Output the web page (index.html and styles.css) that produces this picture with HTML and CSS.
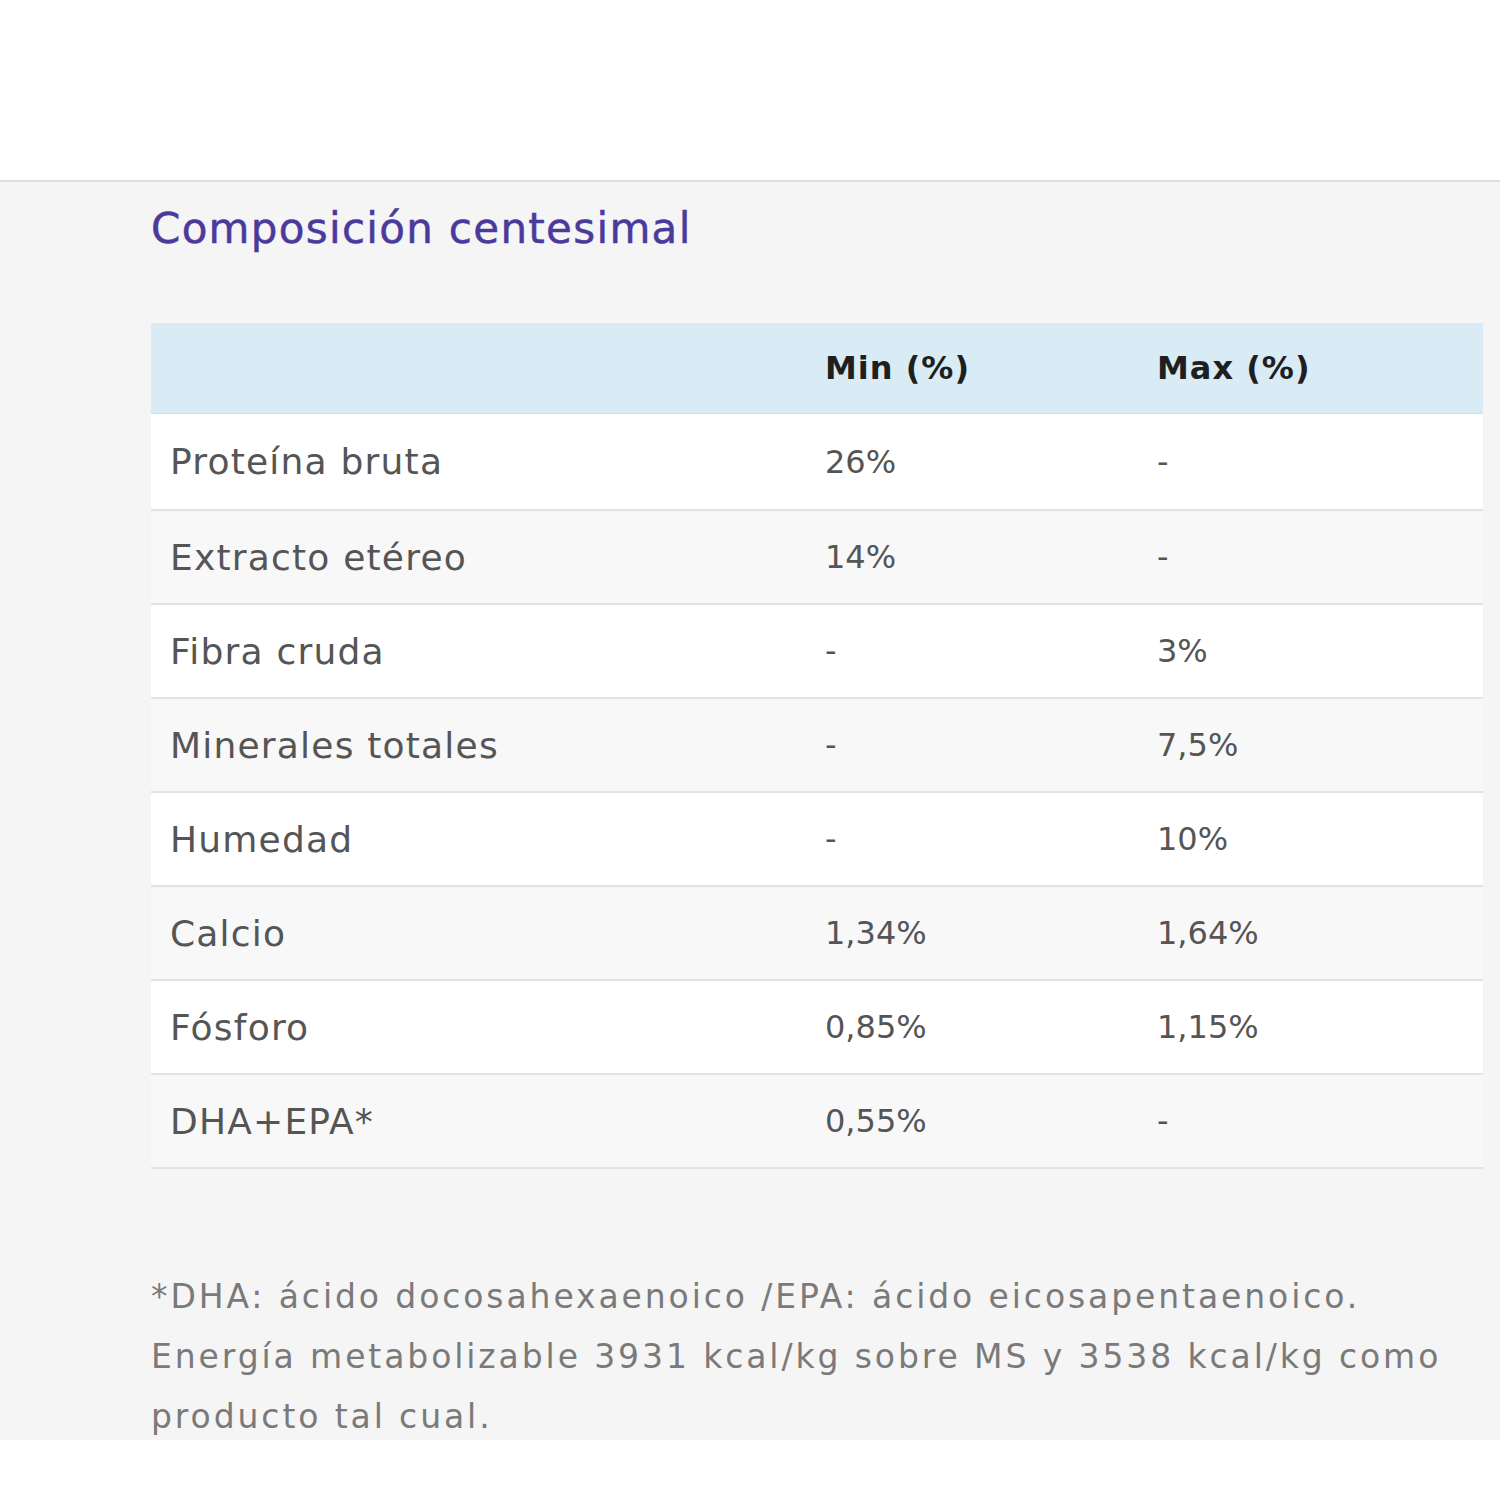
FILE: index.html
```html
<!DOCTYPE html>
<html lang="es">
<head>
<meta charset="utf-8">
<title>Composición centesimal</title>
<link rel="stylesheet" href="styles.css">
</head>
<body>
<div class="top"></div>
<section class="panel">
  <h2 class="title">Composición centesimal</h2>
  <table class="comp">
    <thead>
      <tr><th class="c1"></th><th class="c2">Min (%)</th><th class="c3">Max (%)</th></tr>
    </thead>
    <tbody>
      <tr><td class="name">Proteína bruta</td><td>26%</td><td>-</td></tr>
      <tr><td class="name">Extracto etéreo</td><td>14%</td><td>-</td></tr>
      <tr><td class="name">Fibra cruda</td><td>-</td><td>3%</td></tr>
      <tr><td class="name">Minerales totales</td><td>-</td><td>7,5%</td></tr>
      <tr><td class="name">Humedad</td><td>-</td><td>10%</td></tr>
      <tr><td class="name">Calcio</td><td>1,34%</td><td>1,64%</td></tr>
      <tr><td class="name">Fósforo</td><td>0,85%</td><td>1,15%</td></tr>
      <tr><td class="name">DHA+EPA*</td><td>0,55%</td><td>-</td></tr>
    </tbody>
  </table>
  <p class="note">*DHA: ácido docosahexaenoico /EPA: ácido eicosapentaenoico.<br>Energía metabolizable 3931 kcal/kg sobre MS y 3538 kcal/kg como producto tal cual.</p>
</section>
</body>
</html>
```

FILE: styles.css
```css
html, body {
  margin: 0;
  padding: 0;
  background: #ffffff;
}
body {
  font-family: "DejaVu Sans", "Noto Sans", sans-serif;
}
.top {
  height: 180px;
}
.panel {
  border-top: 2px solid #dedede;
  background: #f5f5f5;
  padding: 22px 17px 0 151px;
  height: 1260px;
  box-sizing: border-box;
}
.title {
  margin: 0;
  font-size: 42px;
  line-height: 50px;
  font-weight: normal;
  letter-spacing: 1.3px;
  color: #4a3a9b;
  -webkit-text-stroke: 0.5px #4a3a9b;
}
.comp {
  margin-top: 69px;
  width: 1332px;
  border-collapse: collapse;
  font-size: 32px;
  color: #555555;
}
.comp th {
  background: #d9ecf5;
  height: 90px;
  text-align: left;
  font-weight: bold;
  color: #1f1f1f;
  letter-spacing: 1px;
  padding: 0 0 0 19px;
  border-bottom: 1px solid #cfe0e8;
}
.comp th.c1 { width: 636px; }
.comp th.c2 { width: 313px; }
.comp td {
  height: 92px;
  padding: 0 0 0 19px;
  border-bottom: 2px solid #e2e2e2;
}
.comp td.name {
  font-size: 36px;
  letter-spacing: 1.2px;
}
.comp tbody tr:first-child td { height: 95px; }
.comp tbody tr:nth-child(odd) td { background: #ffffff; }
.comp tbody tr:nth-child(even) td { background: #f8f8f8; }
.note {
  margin: 98px 0 0 0;
  font-size: 33px;
  line-height: 60px;
  letter-spacing: 2.9px;
  color: #7a7a7a;
}
```
